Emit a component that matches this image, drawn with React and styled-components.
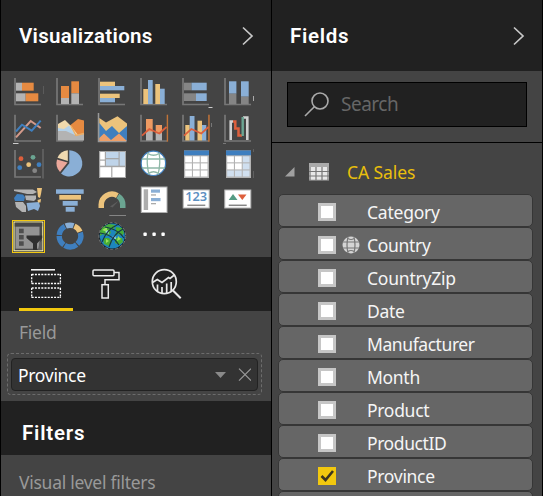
import React from "react";
import styled, { createGlobalStyle, css } from "styled-components";

const GlobalStyle = createGlobalStyle`
  * { box-sizing: border-box; }
  body { margin: 0; background: #000; overflow: hidden; }
`;

const c = {
  dark: "#212121",
  panel: "#444444",
  row: "#666666",
  yellow: "#f2c80f",
  axis: "#777777",
  gray: "#b3b3b3",
  blue: "#8aafd6",
  deep: "#3f7fbf",
  tan: "#ecc37c",
  orange: "#e68a41",
  green: "#6ba592",
  red: "#dd5f3c",
};

const Page = styled.div`
  display: flex;
  width: 543px;
  height: 496px;
  padding: 0 1px;
  gap: 1px;
  overflow: hidden;
  font-family: "Noto Sans", sans-serif;
  font-size: 18px;
`;

const Panel = styled.section`
  display: flex;
  flex-direction: column;
  width: 270px;
  flex: none;
  height: 496px;
  overflow: hidden;
  background: ${c.panel};
`;

const Header = styled.header`
  display: flex;
  flex: none;
  align-items: center;
  justify-content: space-between;
  height: 71px;
  padding: 0 17px 0 18px;
  background: ${c.dark};
`;

const Title = styled.h2`
  margin: 0;
  color: #fff;
  font: 600 20.5px/24px Roboto, sans-serif;
  letter-spacing: ${(p) => p.$track || 0}px;
`;

const Text = styled.span`
  display: block;
  white-space: nowrap;
  color: ${(p) => p.$color || "#f5f5f5"};
  font-size: ${(p) => p.$size || 17.5}px;
  line-height: 24px;
  letter-spacing: ${(p) => p.$track ?? -0.3}px;
`;

const Gallery = styled.div`
  display: grid;
  flex: none;
  grid-template-columns: repeat(6, 42px);
  grid-auto-rows: 36px;
  height: 186px;
  padding: 3px 6px 0;
`;

const Visual = styled.svg`
  display: block;
  width: 42px;
  height: 36px;
  overflow: visible;
`;

const Tabs = styled.nav`
  display: flex;
  flex: none;
  gap: 6px;
  height: 54px;
  padding-left: 18px;
  background: ${c.dark};
`;

const Tab = styled.button`
  width: 54px;
  height: 54px;
  padding: 3px 0 0 12px;
  border: 0;
  border-bottom: 3px solid ${(p) => (p.$active ? c.yellow : "transparent")};
  background: none;
  text-align: left;
  svg { display: block; overflow: visible; }
`;

const FieldArea = styled.div`
  flex: none;
  height: 90px;
  padding: 9px 9px 0 6px;
`;

const FieldLabel = styled.div`
  height: 33px;
  padding-left: 12px;
`;

const Well = styled.div`
  height: 42px;
  padding: 4px 3px;
  border: 1px dashed #6c6c6c;
  border-radius: 4px;
`;

const Chip = styled.div`
  display: flex;
  align-items: center;
  height: 33px;
  padding: 0 6px;
  border: 1px solid #222;
  border-radius: 4px;
  background: #333;
  svg { display: block; }
`;

const Spacer = styled.div`
  flex: 1;
`;

const FiltersBar = styled(Header)`
  height: 54px;
  padding: 9px 0 0 21px;
`;

const FilterNote = styled.div`
  padding: 15px 0 0 18px;
`;

const SearchArea = styled.div`
  flex: none;
  height: 72px;
  padding: 11px 15px 0;
  border-bottom: 1px solid #000;
`;

const SearchBox = styled.div`
  display: flex;
  align-items: center;
  gap: 12px;
  height: 45px;
  padding: 0 0 1px 16px;
  border: 1px solid #000;
  background: ${c.dark};
  svg { display: block; }
`;

const TableRow = styled.div`
  display: flex;
  flex: none;
  align-items: center;
  height: 51px;
  padding: 7px 0 0 13px;
  svg { display: block; }
`;

const TableGlyph = styled.svg`
  margin: 0 18px 0 14px;
`;

const FieldList = styled.div`
  display: flex;
  flex-direction: column;
  flex: none;
  width: 255px;
  margin-left: 6px;
`;

const FieldRow = styled.div`
  display: flex;
  align-items: center;
  height: 33px;
  padding: 3px 0 0 39px;
  border: 1px solid #363636;
  border-radius: 5px;
  background: ${c.row};
`;

const Check = styled.span`
  display: flex;
  width: 18px;
  height: 18px;
  ${(p) =>
    p.$on
      ? css`background: ${c.yellow};`
      : css`background: #fff; border: 3px solid #c6c6c6;`}
`;

const GlobeSlot = styled.span`
  display: flex;
  width: 31px;
  padding-left: 6px;
`;

const Axis = ({ top = 4, bottom = 30.5 }) => (
  <path d={`M8 ${top}V${bottom}H34`} fill="none" stroke={c.axis} strokeWidth="1.7" />
);

/* Each bar is [x, y, width, height, fill]. */
const Bars = ({ items }) =>
  items.map(([x, y, w, h, f], i) => <rect key={i} x={x} y={y} width={w} height={h} fill={f} />);

const trend = <path d="M9 25.7L16.3 19 26.3 23.5 33.5 17" fill="none" stroke={c.red} strokeWidth="1.7" />;

const donutArc = (cx, cy, r, a, b) => {
  const p = (t) => `${cx + r * Math.cos((t * Math.PI) / 180)} ${cy + r * Math.sin((t * Math.PI) / 180)}`;
  return `M${p(a)}A${r} ${r} 0 0 1 ${p(b)}`;
};

const visuals = [
  <><Axis /><Bars items={[[9, 8.7, 6, 8, c.gray], [15, 8.7, 11.7, 8, c.orange], [9, 19.3, 9.7, 8, c.gray], [18.7, 19.3, 12.6, 8, c.orange], [36, 12, 0.7, 8, "#666"]]} /></>,
  <><Axis /><Bars items={[[12, 12, 8, 12, c.orange], [12, 24, 8, 6, c.gray], [22.3, 7.3, 7.7, 12, c.orange], [22.3, 19.3, 7.7, 10.7, c.gray]]} /></>,
  <><Axis /><Bars items={[[9, 7.7, 15, 4.3, c.tan], [9, 12, 24.3, 4.3, c.blue], [9, 19.7, 19.7, 4.3, c.tan], [9, 24, 15, 4.3, c.blue]]} /></>,
  <><Axis /><Bars items={[[10.3, 15, 4.7, 15, c.tan], [15, 6, 4.7, 24, c.blue], [22.3, 10, 4.7, 20, c.tan], [27, 14.7, 4.7, 15.3, c.blue]]} /></>,
  <><Axis /><Bars items={[[9, 8.7, 7.5, 7.6, "#858585"], [16.5, 8.7, 15.2, 7.6, c.blue], [9, 19.3, 12, 7.7, "#858585"], [21, 19.3, 10.7, 7.7, c.blue], [33.5, 33, 4, 1, "#ccc"]]} /></>,
  <><Axis /><Bars items={[[12, 7.3, 7.4, 12.4, c.blue], [12, 19.7, 7.4, 10.3, "#858585"], [24, 7.3, 7.7, 15.4, c.blue], [24, 22.7, 7.7, 7.3, "#858585"], [36, 22, 1, 5, "#aaa"]]} /></>,

  <><Axis top={4.7} bottom={31} /><path d="M9 27.3L23.7 11 33.7 18" fill="none" stroke="#d49a8b" strokeWidth="2" /><path d="M9 21.5L15 14.7 24.7 20.7 33.7 10.7" fill="none" stroke={c.deep} strokeWidth="2" /><path d="M6 33.5H11.5" stroke="#ccc" /></>,
  <><Axis top={4.7} bottom={31} /><path d="M14 21L29 9 35 10.5V28L20 26z" fill={c.orange} /><path d="M9 14L16 10 22 16 29 25 9 22z" fill="#f0d9ac" /><path d="M9 18L15 19 20 15.5 27 25 9 25z" fill="#b5d2e9" /><path d="M9 21L17 21 27 25.5 35 23V30.5H9z" fill={c.gray} /><path d="M22 16L27 25.5 35 23.5" fill="none" stroke="#edae65" strokeWidth="1.3" /></>,
  <><path d="M7.5 3V31.5H35.5" fill="none" stroke="#999" strokeWidth="1.5" /><path d="M8.3 8L15 12.5 26.5 6.3 36 13.5V31H8.3z" fill={c.tan} /><path d="M8.3 13L15 21 21 16 28 23 36 16V31H8.3z" fill={c.deep} /><path d="M8.3 31L8.3 28 13 23.5 20 30 28 23.5 36 31z" fill="#eda06a" /></>,
  <><Axis top={4.7} bottom={31} /><Bars items={[[13, 9, 6.7, 13, "#ed9a62"], [13, 21.5, 6.7, 9, c.gray], [22.7, 15, 6.3, 9, "#ed9a62"], [22.7, 23.3, 6.3, 7.2, c.gray], [33.7, 4.7, 1.4, 27, "#c17338"]]} />{trend}</>,
  <><Axis top={4.7} bottom={31} /><Bars items={[[10.3, 15, 4.4, 15.5, c.tan], [14.7, 6, 4.8, 24.5, c.blue], [22.5, 10.7, 4.5, 19.8, c.tan], [27, 15, 4.3, 15.5, c.blue], [33.2, 4.7, 1.5, 27, "#c17338"], [36, 13, 1, 4, "#777"]]} />{trend}</>,
  <><Axis top={4.7} bottom={31} /><path d="M13.7 30V11.5H16M30.3 30V7.5H26" fill="none" stroke="#d0d0d0" strokeWidth="2.6" /><path d="M16 11.5H18.3V18.5H21.5V25.5H25" fill="none" stroke={c.red} strokeWidth="2.5" /><path d="M25.7 7V26" stroke={c.green} strokeWidth="2.4" /><path d="M6 33.5H9" stroke="#777" /></>,

  <><Axis top={4} bottom={31} /><path d="M36 3V32.5" stroke={c.axis} />{[[14, 12.7, c.red], [26, 11.3, c.green], [21.7, 18.7, c.tan], [12.7, 21.7, c.deep], [32, 18.7, c.deep], [27.7, 24.7, "#858585"]].map(([x, y, f]) => <circle key={x} cx={x} cy={y} r="2.4" fill={f} />)}</>,
  <><path d="M20.3 17.3V4.2A13.1 13.1 0 1 1 12 27.5z" fill={c.blue} /><path d="M18.6 16.5L8 13.5A13 13 0 0 0 11 26z" fill="#eba79a" /><path d="M18.8 15V4.3A12.5 12.5 0 0 0 8.5 11.8z" fill="#efd9b0" /></>,
  <><rect x="8" y="5" width="27" height="27" fill="#a6a6a6" /><Bars items={[[9.2, 6, 4.6, 7.5, "#fff"], [9.2, 14.7, 4.6, 5, "#fff"], [15, 6, 12.5, 6, "#bfd4e9"], [15, 13.3, 12.5, 6.4, "#bfd4e9"], [28.7, 6, 5.3, 13.7, "#bfd4e9"], [9.2, 21.2, 11, 9.8, "#fff"], [21.4, 21.2, 12.6, 9.8, "#fff"]]} /></>,
  <><circle cx="20.4" cy="17.3" r="12.2" fill="#fff" stroke={c.deep} strokeWidth="1.2" /><path d="M9 13H32M9 22H32M15 6.5Q13 17 16 28.5M26 6.5Q28 17 25 28.5M15 7.5Q20.5 11 26 7.5M15.5 27.5Q20.5 24 25.5 27.5" fill="none" stroke="#8fb8a8" strokeWidth="1.3" /></>,
  <><rect x="9" y="4.5" width="25" height="27.5" fill="#b3b3b3" /><rect x="9" y="4.5" width="25" height="4.8" fill={c.deep} />{[0, 1, 2].map((r) => [0, 1, 2].map((k) => <rect key={`${r}${k}`} x={10.2 + k * 7.8} y={10.3 + r * 7.1} width="6.7" height="6" fill="#fff" />))}</>,
  <><rect x="9" y="4.5" width="25" height="27.5" fill="#b3b3b3" /><rect x="9" y="4.5" width="25" height="4.8" fill={c.deep} />{[0, 1, 2].map((r) => [0, 1, 2].map((k) => <rect key={`${r}${k}`} x={10.2 + k * 7.8} y={10.3 + r * 7.1} width="6.7" height="6" fill={r === 2 || k === 2 ? "#d0dfef" : "#fff"} />))}<path d="M36.5 3V6M36.5 25V32" stroke="#606060" /></>,

  <><path d="M7 7.5H26L30 10 26 12H20L14 10.5 7 9z" fill={c.gray} /><path d="M10 12L16 12.5 18 15 17 19H8L7 16z" fill={c.deep} /><path d="M18 13.5H29V17L27 19 19 18z" fill={c.gray} /><path d="M8 20H16L19 24V30H15L9 25z" fill={c.gray} /><path d="M19.5 21L32 20 33 24 31 29 27 27 21 29z" fill={c.blue} /><path d="M30 6L35 6 34 12 33 16 31 15zM30.5 18L34 17 33.5 20.5 31 20.5z" fill={c.tan} /></>,
  <Bars items={[[7, 7.3, 27.7, 4.5, c.blue], [10.3, 13, 21.7, 4.7, c.tan], [13.7, 19, 15, 4.7, c.blue], [16.7, 25, 9, 4.7, c.blue]]} />,
  <><path d={donutArc(21, 23, 10.8, 180, 300)} fill="none" stroke={c.tan} strokeWidth="5.5" /><path d={donutArc(21, 23, 10.8, 303, 360)} fill="none" stroke={c.green} strokeWidth="5.5" /><path d="M7.5 23V26H13V23z" fill={c.tan} /><path d="M29 23V26H34.5V23z" fill={c.green} /><path d="M19 24.5L28 18.5 21.5 25.5z" fill="#5d5d5d" /><path d="M18.3 33.5H35" stroke="#858585" /></>,
  <><rect x="8.3" y="5" width="25.7" height="25.5" fill="#fff" stroke="#b0b0b0" /><Bars items={[[10.7, 7.3, 4.4, 20.7, "#adadad"], [18, 7.5, 9, 3.2, c.blue], [18, 12.3, 5, 1.3, "#aaa"], [18, 16, 9.5, 3.2, c.blue], [18, 21, 5, 1.3, "#aaa"]]} /></>,
  <><rect x="8.2" y="8" width="26" height="18" fill="#fff" stroke="#b5b5b5" /><text x="21.2" y="19.3" textAnchor="middle" fontFamily="Noto Sans" fontSize="12.8" fontWeight="600" fill="#5c90c2">123</text><path d="M12.3 23.3H30.3" stroke="#8b8b8b" strokeWidth="1.5" /></>,
  <><rect x="7.8" y="8" width="26" height="18" fill="#fff" stroke="#b5b5b5" /><path d="M11.7 18L16 12 20.5 18z" fill="#559b83" /><path d="M21 12.5H29.5L25.3 18z" fill={c.red} /><path d="M11.7 23.3H29.7" stroke="#858585" strokeWidth="1.5" /></>,

  <><rect x="5.5" y="2.5" width="32" height="32" fill="#2a2a2a" stroke="#f2c811" /><rect x="7" y="4" width="28.8" height="28.8" fill="#4a4a4a" stroke="#fff7b0" strokeWidth="1.1" /><path d="M7.7 4.7H35.2V8.5H7.7z" fill="#464646" /><rect x="8.5" y="8.7" width="24" height="22" fill="#939393" /><Bars items={[[12, 10.7, 4.7, 4.5, "#4e4e4e"], [12, 17, 4.7, 4.5, "#4e4e4e"], [12, 23.3, 4.7, 4.5, "#4e4e4e"]]} /><path d="M19.5 17.5H35.2V20L30 25.5V32H26V25.5L19.5 20z" fill="#303030" /><path d="M32.5 25L35.2 22V32H31z" fill="#626262" /></>,
  <>{[[-113, -71, c.blue], [-66, -23, c.tan], [-18, 47, c.deep], [52, 120, c.deep], [125, 180, c.deep], [185, 242, c.deep]].map(([a, b, f]) => <path key={a} d={donutArc(21, 18, 10.8, a, b)} fill="none" stroke={f} strokeWidth="5.4" />)}</>,
  <><circle cx="21.3" cy="18" r="13.4" fill="#14212a" stroke="#777" strokeDasharray="3 2" /><circle cx="21.3" cy="18" r="12.5" fill="#1d86bd" /><path d="M12 9L18 6 24 7 23 11 19 12 20 15 16 18 12 16 9 18 9 13zM25 9L31 10 33 15 31 18 27 16 24 18 25 13zM12 20L18 20 21 24 18 28 13 26zM24 20L31 20 32 24 28 27 24 25z" fill="#48ad36" /><path d="M11 12L16 9V14zM27 18L30 21 26 23zM15 21L18 23 15 25z" fill="#9be05d" /><path d="M14 14L17 12 18 16zM20 20L24 17 25 21z" fill="#9edced" /><path d="M11 24Q16 11 27 6.5M18 29Q22 16 32 11M9 15Q21 16 28 27M14 9Q27 11 33 20" fill="none" stroke="#15364a" strokeWidth="1.1" /></>,
  <>{[12, 21, 30].map((x) => <rect key={x} x={x - 1.6} y="14.6" width="3.4" height="3.4" rx="0.9" fill="#fff" />)}</>,
];

const Chevron = () => (
  <svg width="12" height="20" viewBox="0 0 12 20" fill="none" stroke="#c8c8c8" strokeWidth="1.7">
    <path d="M1 1.5L10 10 1 18.5" />
  </svg>
);

const Globe = () => (
  <svg width="18" height="18" viewBox="0 0 18 18" fill="none">
    <circle cx="9" cy="9" r="8.5" fill="#d5d5d5" />
    <path d="M1 6H17M1 12H17M6 1Q4 9 6 17M12 1Q14 9 12 17M6 2.5Q9 4.5 12 2.5M6 15.5Q9 13.5 12 15.5" stroke="#777" strokeWidth="1.2" />
  </svg>
);

const fields = [
  { name: "Category", track: -0.22 },
  { name: "Country", geo: true },
  { name: "CountryZip", track: -0.22 },
  { name: "Date" },
  { name: "Manufacturer", track: -0.42 },
  { name: "Month" },
  { name: "Product" },
  { name: "ProductID", track: -0.42 },
  { name: "Province", on: true },
  { name: "" },
];

export default function App() {
  return (
    <Page>
      <GlobalStyle />
      <Panel>
        <Header>
          <Title $track={0.3}>Visualizations</Title>
          <Chevron />
        </Header>
        <Gallery>
          {visuals.map((v, i) => (
            <Visual key={i} viewBox="0 0 42 36">{v}</Visual>
          ))}
        </Gallery>
        <Tabs>
          <Tab $active aria-label="Fields">
            <svg width="30" height="30" fill="none" stroke="#fff">
              <path d="M0 .8H24" strokeWidth="1.5" />
              <path d="M.7 5.5H30M.7 14.5H30M.7 5V15M29.4 5V15M.7 19H30M.7 28.3H30M.7 19V29M29.4 19V29" strokeWidth="1.3" strokeDasharray="2 1.2" />
            </svg>
          </Tab>
          <Tab aria-label="Format">
            <svg width="30" height="30" fill="none" stroke="#ececec" strokeWidth="1.5">
              <rect x="2" y="1" width="21" height="5.7" rx="1" />
              <path d="M23 3.5H28V10.7H14V15.5" />
              <rect x="11" y="15.7" width="6.3" height="13.3" />
            </svg>
          </Tab>
          <Tab aria-label="Analytics">
            <svg width="30" height="30" fill="none" stroke="#e8e8e8" strokeWidth="1.7">
              <circle cx="13.3" cy="12.7" r="12" />
              <path d="M22 21.5L29.7 29.3" strokeWidth="2" />
              <path d="M1.5 13.5L6.3 10.5 11 13.5 17.5 8.5 19 9.5 24 5.5" />
              <path d="M6.5 15.5V22M11 18V24.5M15.7 14.5V24.5M20.2 13V22" />
            </svg>
          </Tab>
        </Tabs>
        <FieldArea>
          <FieldLabel><Text $color="#999" $track={-0.25}>Field</Text></FieldLabel>
          <Well>
            <Chip>
              <Text $color="#fff">Province</Text>
              <Spacer />
              <svg width="38" height="16" fill="none">
                <path d="M2 5H13L7.5 11z" fill="#8a8a8a" />
                <path d="M26 1.7L38 13.7M38 1.7L26 13.7" stroke="#999" strokeWidth="1.2" />
              </svg>
            </Chip>
          </Well>
        </FieldArea>
        <FiltersBar><Title $track={0.8}>Filters</Title></FiltersBar>
        <FilterNote><Text $color="#999" $track={-0.27}>Visual level filters</Text></FilterNote>
      </Panel>

      <Panel>
        <Header>
          <Title $track={0.7}>Fields</Title>
          <Chevron />
        </Header>
        <SearchArea>
          <SearchBox>
            <svg width="25" height="25" fill="none" stroke="#aaa" strokeWidth="1.6">
              <circle cx="16" cy="9" r="8" />
              <path d="M10.3 14.7L1 24" />
            </svg>
            <Text $color="#666" $size={19} $track={-0.5}>Search</Text>
          </SearchBox>
        </SearchArea>
        <TableRow>
          <svg width="10" height="10"><path d="M9.5 0V9.5H0z" fill="#a0a0a0" /></svg>
          <TableGlyph width="20" height="18">
            <path d="M0 0H20V18H0z" fill="#e8e8e8" />
            <path d="M0 0H20V4H0z" fill="#aaa" />
            <path d="M0 8.5H20M0 13H20M1 4V18M7 4V18M13 4V18M19 4V18M0 17.3H20" stroke="#777" strokeWidth="1.2" />
          </TableGlyph>
          <Text $color="#e9bf0c" $track={-0.1}>CA Sales</Text>
        </TableRow>
        <FieldList>
          {fields.map((f) => (
            <FieldRow key={f.name}>
              <Check $on={f.on}>
                {f.on && (
                  <svg width="18" height="18" fill="none" stroke="#3b3520" strokeWidth="2.6">
                    <path d="M3.5 9L7.5 13 15 4" />
                  </svg>
                )}
              </Check>
              <GlobeSlot>{f.geo && <Globe />}</GlobeSlot>
              <Text $track={f.track}>{f.name}</Text>
            </FieldRow>
          ))}
        </FieldList>
      </Panel>
    </Page>
  );
}
